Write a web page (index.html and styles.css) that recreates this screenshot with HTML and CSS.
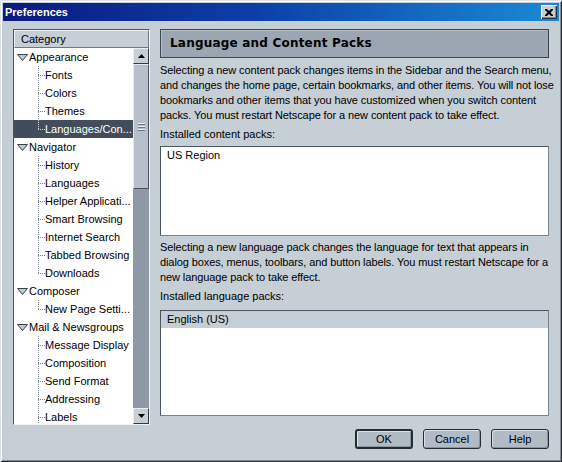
FILE: index.html
```html
<!DOCTYPE html>
<html>
<head>
<meta charset="utf-8">
<title>Preferences</title>
<link rel="stylesheet" href="styles.css">
</head>
<body>
<div class="window">
  <div class="titlebar">
    <span class="title">Preferences</span>
    <span class="close"><svg width="8" height="7" viewBox="0 0 8 7"><path d="M0 0h2l2 2 2-2h2v1l-2.5 2.5L8 6v1H6L4 5 2 7H0V6l2.5-2.5L0 1z" fill="#000"/></svg></span>
  </div>
  <div class="body">
    <div class="tree">
      <div class="tree-head">Category</div>
      <div class="tree-main">
        <div class="rows">
          <div class="row parent"><svg class="twisty" width="11" height="7" viewBox="0 0 11 7"><path d="M0.5 0.5H10.5L5.5 6.5Z" fill="#c0c8d0" stroke="#39414b"/></svg>Appearance</div>
          <div class="row child">Fonts</div>
          <div class="row child">Colors</div>
          <div class="row child">Themes</div>
          <div class="row child last selected">Languages/Con...</div>
          <div class="row parent"><svg class="twisty" width="11" height="7" viewBox="0 0 11 7"><path d="M0.5 0.5H10.5L5.5 6.5Z" fill="#c0c8d0" stroke="#39414b"/></svg>Navigator</div>
          <div class="row child">History</div>
          <div class="row child">Languages</div>
          <div class="row child">Helper Applicati...</div>
          <div class="row child">Smart Browsing</div>
          <div class="row child">Internet Search</div>
          <div class="row child">Tabbed Browsing</div>
          <div class="row child last">Downloads</div>
          <div class="row parent"><svg class="twisty" width="11" height="7" viewBox="0 0 11 7"><path d="M0.5 0.5H10.5L5.5 6.5Z" fill="#c0c8d0" stroke="#39414b"/></svg>Composer</div>
          <div class="row child last">New Page Setti...</div>
          <div class="row parent"><svg class="twisty" width="11" height="7" viewBox="0 0 11 7"><path d="M0.5 0.5H10.5L5.5 6.5Z" fill="#c0c8d0" stroke="#39414b"/></svg>Mail &amp; Newsgroups</div>
          <div class="row child">Message Display</div>
          <div class="row child">Composition</div>
          <div class="row child">Send Format</div>
          <div class="row child">Addressing</div>
          <div class="row child">Labels</div>
        </div>
        <div class="scrollbar">
          <div class="sb-btn"><svg width="7" height="4" viewBox="0 0 7 4"><path d="M3.5 0L7 4H0Z" fill="#000"/></svg></div>
          <div class="sb-thumb"><span class="grip"></span></div>
          <div class="sb-track"></div>
          <div class="sb-btn"><svg width="7" height="4" viewBox="0 0 7 4"><path d="M0 0H7L3.5 4Z" fill="#000"/></svg></div>
        </div>
      </div>
    </div>
    <div class="pane">
      <div class="pane-head">Language and Content Packs</div>
      <p class="desc first">Selecting a new content pack changes items in the Sidebar and the Search menu,<br>and changes the home page, certain bookmarks, and other items. You will not lose<br>bookmarks and other items that you have customized when you switch content<br>packs. You must restart Netscape for a new content pack to take effect.</p>
      <div class="label">Installed content packs:</div>
      <div class="listbox content-box"><div class="item">US Region</div></div>
      <p class="desc">Selecting a new language pack changes the language for text that appears in<br>dialog boxes, menus, toolbars, and button labels. You must restart Netscape for a<br>new language pack to take effect.</p>
      <div class="label">Installed language packs:</div>
      <div class="listbox lang-box"><div class="item sel">English (US)</div></div>
      <div class="buttons">
        <span class="btn default">OK</span>
        <span class="btn">Cancel</span>
        <span class="btn">Help</span>
      </div>
    </div>
  </div>
</div>
</body>
</html>
```

FILE: styles.css
```css
html, body {
  margin: 0;
  padding: 0;
}
body {
  font-family: "Liberation Sans", Arial, sans-serif;
  font-size: 11px;
  color: #000;
}
.window {
  width: 562px;
  height: 462px;
  box-sizing: border-box;
  padding: 3px;
  background: #c6ced6;
  box-shadow: inset 1px 1px #dfe4ea, inset -1px -1px #2c3036, inset 2px 2px #ffffff, inset -2px -2px #808a94;
  display: flex;
  flex-direction: column;
}
.titlebar {
  height: 18px;
  flex: none;
  display: flex;
  align-items: center;
  justify-content: space-between;
  padding: 0 2px 0 2px;
  background: linear-gradient(90deg, #0a1a80 0%, #0c3fa6 45%, #1a8ad6 100%);
}
.title {
  color: #fff;
  font-family: "Liberation Sans", Arial, sans-serif;
  font-weight: bold;
  font-size: 11px;
  line-height: 18px;
}
.close {
  width: 16px;
  height: 14px;
  box-sizing: border-box;
  background: #c6ced6;
  box-shadow: inset 1px 1px #ffffff, inset -1px -1px #2c3036, inset -2px -2px #808a94;
  display: flex;
  align-items: center;
  justify-content: center;
}
.close svg {
  display: block;
}
.body {
  display: flex;
  gap: 10px;
  padding: 8px 10px 0 10px;
}
.tree {
  width: 137px;
  height: 396px;
  flex: none;
  box-sizing: border-box;
  border: 1px solid;
  border-color: #4c5660 #f2f5f8 #f2f5f8 #4c5660;
  background: #fff;
  display: flex;
  flex-direction: column;
}
.tree-head {
  height: 18px;
  flex: none;
  box-sizing: border-box;
  padding-left: 6px;
  line-height: 16px;
  background: #c6ced6;
  border: 1px solid;
  border-color: #eef1f4 #6e7882 #6e7882 #eef1f4;
}
.tree-main {
  flex: 1;
  min-height: 0;
  display: flex;
}
.rows {
  flex: 1;
  overflow: hidden;
}
.row {
  height: 18px;
  line-height: 18px;
  white-space: nowrap;
}
.parent {
  display: flex;
  align-items: center;
  gap: 1px;
  padding-left: 3px;
}
.twisty {
  display: block;
  flex: none;
}
.child {
  padding-left: 31px;
  background-image:
    repeating-linear-gradient(to bottom, #7c8690 0 1px, transparent 1px 2px),
    repeating-linear-gradient(to right, #7c8690 0 1px, transparent 1px 2px);
  background-repeat: no-repeat;
  background-position: 24px 0, 24px 9px;
  background-size: 1px 100%, 7px 1px;
}
.child.last {
  background-size: 1px 10px, 7px 1px;
}
.child.selected {
  background-color: #434c5a;
  color: #fff;
  background-image:
    repeating-linear-gradient(to bottom, #d0d6dc 0 1px, transparent 1px 2px),
    repeating-linear-gradient(to right, #d0d6dc 0 1px, transparent 1px 2px);
}
.scrollbar {
  width: 16px;
  flex: none;
  display: flex;
  flex-direction: column;
  background: #8e99a5;
}
.sb-btn {
  height: 16px;
  flex: none;
  box-sizing: border-box;
  background: #c6ced6;
  border: 1px solid;
  border-color: #eef1f4 #333a42 #333a42 #eef1f4;
  display: flex;
  align-items: center;
  justify-content: center;
}
.sb-btn svg {
  display: block;
}
.sb-thumb {
  height: 125px;
  flex: none;
  box-sizing: border-box;
  background: #b7c0ca;
  border: 1px solid;
  border-color: #e4e9ee #4a525c #4a525c #e4e9ee;
  display: flex;
  align-items: center;
  justify-content: center;
}
.grip {
  width: 7px;
  height: 8px;
  background: repeating-linear-gradient(to bottom, #eef1f4 0 1px, #6c7680 1px 2px, transparent 2px 3px);
}
.sb-track {
  flex: 1;
}
.pane {
  width: 389px;
  flex: none;
  display: flex;
  flex-direction: column;
}
.pane-head {
  height: 29px;
  flex: none;
  box-sizing: border-box;
  border: 1px solid #3c4550;
  background: #9ba6b2;
  box-shadow: inset 1px 1px #b4bdc7;
  padding-left: 9px;
  font-family: "DejaVu Sans", Verdana, sans-serif;
  font-weight: bold;
  font-size: 12px;
  letter-spacing: 0.2px;
  line-height: 27px;
}
.desc {
  margin: 4px 0 0;
  line-height: 15px;
  white-space: nowrap;
  letter-spacing: -0.1px;
}
.desc.first {
  margin-top: 5px;
}
.label {
  margin-top: 4px;
  line-height: 15px;
}
.listbox {
  flex: none;
  margin-top: 4px;
  box-sizing: border-box;
  background: #fff;
  border: 1px solid;
  border-color: #4c5660 #7a848e #7a848e #4c5660;
}
.content-box {
  height: 90px;
}
.lang-box {
  height: 106px;
  margin-top: 6px;
}
.item {
  height: 17px;
  line-height: 17px;
  padding-left: 6px;
}
.item.sel {
  background: #c6ced6;
}
.buttons {
  margin-top: 13px;
  display: flex;
  justify-content: flex-end;
  gap: 10px;
}
.btn {
  width: 58px;
  height: 20px;
  box-sizing: border-box;
  border: 1px solid #262c34;
  border-radius: 3px;
  background: #b1bbc6;
  box-shadow: inset 1px 1px #dbe1e7, inset -1px -1px #8a949f;
  display: flex;
  align-items: center;
  justify-content: center;
  line-height: 18px;
}
.btn.default {
  border-width: 2px;
}
```
